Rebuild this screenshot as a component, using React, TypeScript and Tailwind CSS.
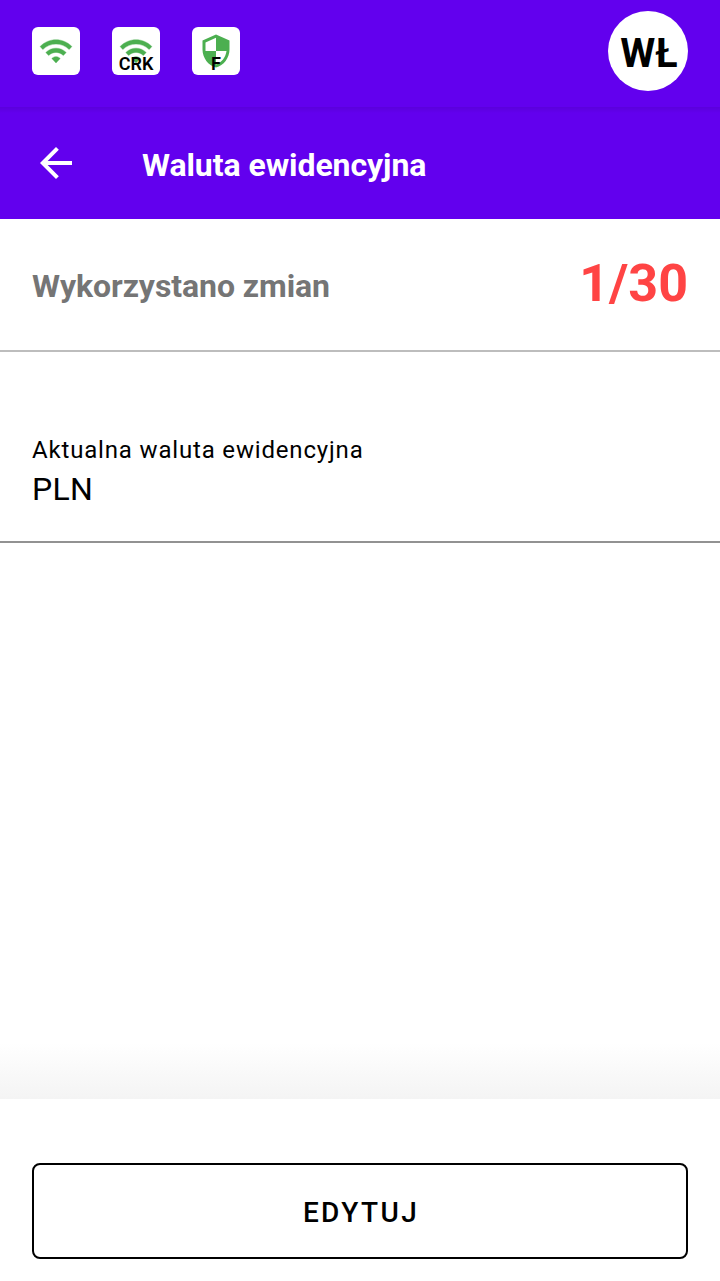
function WifiIcon() {
  return (
    <svg viewBox="0 0 24 24" className="h-9 w-9" fill="#4caf50" stroke="#4caf50" strokeWidth={0.25}>
      <path d="M1.4 9l1.8 2c4.97-4.8 12.63-4.8 17.6 0l1.8-2C16.73 2.98 7.28 2.98 1.4 9zm7.8 8l2.8 3 2.8-3c-1.65-1.66-3.94-1.66-5.6 0zm-4-4l1.9 2c2.7-2.7 7.1-2.7 9.8 0l1.9-2C15.04 9.14 8.97 9.14 5.2 13z" />
    </svg>
  );
}

function ShieldIcon() {
  return (
    <svg viewBox="0 0 24 24" className="h-9 w-9" fill="#4caf50">
      <path d="M12 1L3 5v6c0 5.55 3.84 10.74 9 12 5.16-1.26 9-6.45 9-12V5l-9-4zm0 10.99h7c-.53 4.12-3.28 7.79-7 8.94V12H5V6.3l7-3.11v8.8z" />
    </svg>
  );
}

const statuses = [
  { id: 'wifi', icon: <WifiIcon />, label: '' },
  { id: 'crk', icon: <WifiIcon />, label: 'CRK' },
  { id: 'fiscal', icon: <ShieldIcon />, label: 'F' },
];

export default function App() {
  return (
    <div className="flex h-[1281px] w-[720px] flex-col overflow-hidden bg-white font-['Roboto',sans-serif] text-black">
      {/* Status bar */}
      <header className="flex h-[107px] shrink-0 items-start justify-between bg-[#6200ee] px-8 pt-[11px]">
        <div className="flex gap-8 pt-4">
          {statuses.map((s) => (
            <div key={s.id} className="relative flex h-12 w-12 items-center justify-center rounded-md bg-white">
              {s.icon}
              {s.label && (
                <span className="absolute inset-x-0 bottom-0 text-center text-lg leading-[22px] font-semibold">{s.label}</span>
              )}
            </div>
          ))}
        </div>
        <div className="flex h-20 w-20 items-center justify-center rounded-full bg-white pt-1.5 pl-0.5 text-[40px] leading-none font-bold">
          WŁ
        </div>
      </header>

      {/* App bar */}
      <div className="flex h-28 shrink-0 items-center bg-[#6200ee] bg-linear-to-b from-black/8 to-transparent to-[6px] pl-8 text-white">
        <svg viewBox="0 0 24 24" className="h-12 w-12" fill="currentColor">
          <path d="M20 11H7.83l5.59-5.59L12 4l-8 8 8 8 1.41-1.41L7.83 13H20v-2z" />
        </svg>
        <h1 className="ml-[62px] pt-1 text-[32px] leading-10 font-bold tracking-[-0.07px]">Waluta ewidencyjna</h1>
      </div>

      {/* Change counter */}
      <section className="flex h-[133px] shrink-0 items-center justify-between border-b-2 border-[#bdbdbd] px-8 pb-0.5">
        <span className="pt-1 text-[32px] leading-10 font-bold tracking-[-0.07px] text-[#757575]">Wykorzystano zmian</span>
        <span className="text-[52px] leading-[60px] font-bold text-[#ff4444]">1/30</span>
      </section>

      {/* Current currency */}
      <section className="flex h-[191px] shrink-0 flex-col border-b-2 border-[#929292] px-8 pt-[82px]">
        <span className="text-2xl leading-8 tracking-[0.83px]">Aktualna waluta ewidencyjna</span>
        <span className="mt-[3px] text-[32px] leading-10 tracking-[0.3px]">PLN</span>
      </section>

      <div className="flex flex-1 flex-col justify-end">
        <div className="h-14 bg-linear-to-b from-white to-[#f4f4f4]" />
      </div>

      <footer className="h-[182px] shrink-0 px-8 pt-16">
        <button className="h-24 w-full rounded-lg border-2 border-black pt-1 pl-0.5 text-[28px] font-medium tracking-[2.4px]">EDYTUJ</button>
      </footer>
    </div>
  );
}
